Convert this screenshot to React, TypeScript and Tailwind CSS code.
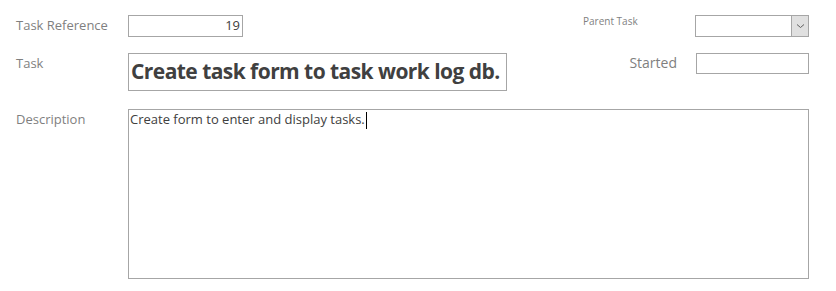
import React from "react";

export default function App() {
  return (
    <div
      className="w-[836px] h-[291px] bg-white overflow-hidden pl-[16px] pt-[15px] font-['Open_Sans',_'Noto_Sans',_sans-serif]"
    >
      {/* Row 1 */}
      <div className="flex items-start h-[22px]">
        <div className="w-[112px] text-[13px] leading-[18px] pt-[1px] text-[#7f7f7f]">Task Reference</div>
        <div className="w-[115px] h-[22px] border border-[#a6a6a6] flex items-center justify-end pr-[2px] text-[13px] text-[#404040]">
          19
        </div>
        <div className="w-[340px]" />
        <div className="w-[112px] text-[10px] leading-[14px] -mt-[1px] text-[#7f7f7f]">Parent Task</div>
        <div className="w-[114px] h-[22px] border border-[#a6a6a6] flex justify-end">
          <div className="w-[17px] h-full bg-[#e0e0e0] border-l border-[#a6a6a6] flex items-center justify-center">
            <svg width="9" height="6" viewBox="0 0 9 6">
              <path d="M1 1.5 L4.5 4.5 L8 1.5" stroke="#606060" strokeWidth="1" fill="none" />
            </svg>
          </div>
        </div>
      </div>

      {/* Row 2 */}
      <div className="flex items-start mt-[16px] h-[38px]">
        <div className="w-[112px] text-[13px] leading-[18px] pt-[1px] text-[#7f7f7f]">Task</div>
        <div className="w-[379px] h-[38px] border border-[#a6a6a6] flex items-center pl-[2px] text-[21px] font-bold text-[#404040] tracking-[-0.55px] whitespace-nowrap overflow-hidden">
          Create task form to task work log db.
        </div>
        <div className="w-[189px] text-right pr-[19px] text-[14px] leading-[18px] pt-[1px] text-[#7f7f7f]">Started</div>
        <div className="w-[113px] h-[21px] border border-[#a6a6a6]" />
      </div>

      {/* Row 3 */}
      <div className="flex items-start mt-[18px]">
        <div className="w-[112px] text-[13px] leading-[18px] pt-[1px] text-[#7f7f7f]">Description</div>
        <div className="w-[681px] h-[170px] border border-[#a6a6a6] pl-[1px] text-[13px] leading-[18px] text-[#404040]">
          Create form to enter and display tasks.
          <span className="inline-block w-[1px] h-[17px] bg-black align-middle ml-[1px]" />
        </div>
      </div>
    </div>
  );
}
